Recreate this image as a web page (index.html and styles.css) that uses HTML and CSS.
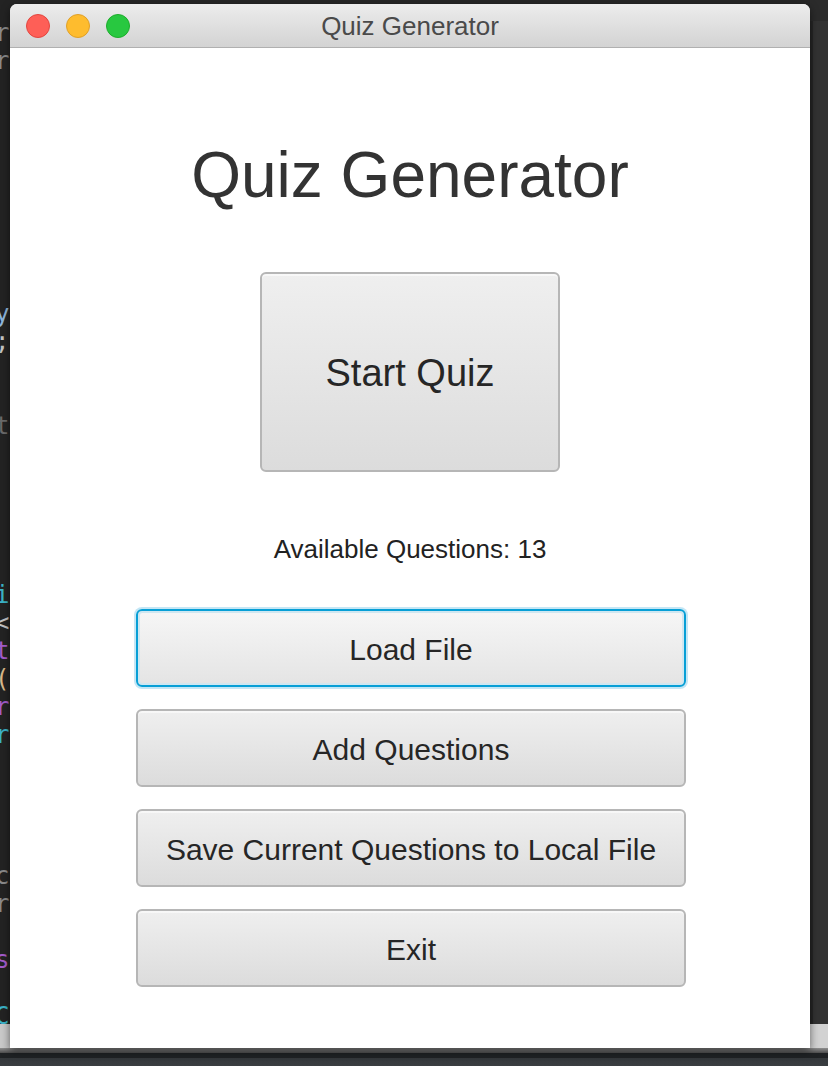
FILE: index.html
```html
<!DOCTYPE html>
<html lang="en">
<head>
<meta charset="utf-8">
<title>Quiz Generator</title>
<link rel="stylesheet" href="styles.css">
</head>
<body>
<div class="screen">
  <div class="desk">
    <div class="side side-left">
      <div class="code">
        <div class="ln c-gray">r</div>
        <div class="ln c-gray">r</div>
        <div class="ln"></div><div class="ln"></div><div class="ln"></div><div class="ln"></div>
        <div class="ln"></div><div class="ln"></div><div class="ln"></div><div class="ln"></div>
        <div class="ln c-blue">y</div>
        <div class="ln c-light">;</div>
        <div class="ln"></div><div class="ln"></div>
        <div class="ln c-dim">t</div>
        <div class="ln"></div><div class="ln"></div><div class="ln"></div><div class="ln"></div><div class="ln"></div>
        <div class="ln c-teal">i</div>
        <div class="ln c-light">&lt;</div>
        <div class="ln c-purple">t</div>
        <div class="ln c-orange">(</div>
        <div class="ln c-purple">r</div>
        <div class="ln c-teal">r</div>
        <div class="ln"></div><div class="ln"></div><div class="ln"></div><div class="ln"></div>
        <div class="ln c-gray">c</div>
        <div class="ln c-gray">r</div>
        <div class="ln"></div>
        <div class="ln c-purple">s</div>
        <div class="ln"></div>
        <div class="ln c-teal">C</div>
      </div>
      <div class="band"></div>
    </div>

    <div class="window">
      <div class="titlebar">
        <div class="lights">
          <span class="light red"></span>
          <span class="light yellow"></span>
          <span class="light green"></span>
        </div>
        <div class="wtitle">Quiz Generator</div>
      </div>
      <div class="content">
        <h1 class="heading">Quiz Generator</h1>
        <button class="btn btn-start">Start Quiz</button>
        <p class="count">Available Questions: 13</p>
        <div class="actions">
          <button class="btn btn-wide focused">Load File</button>
          <button class="btn btn-wide">Add Questions</button>
          <button class="btn btn-wide">Save Current Questions to Local File</button>
          <button class="btn btn-wide">Exit</button>
        </div>
      </div>
    </div>

    <div class="side side-right">
      <div class="dark"></div>
      <div class="band band-r"></div>
    </div>
  </div>
  <div class="taskbar"></div>
</div>
</body>
</html>
```

FILE: styles.css
```css
* { box-sizing: border-box; }

html, body {
  margin: 0;
  padding: 0;
  background: #262626;
}

.screen {
  width: 828px;
  height: 1066px;
  display: flex;
  flex-direction: column;
  overflow: hidden;
}

.desk {
  display: flex;
  height: 1048px;
}

.side {
  display: flex;
  flex-direction: column;
}

.side-left { width: 10px; }
.side-right { width: 18px; }

.code {
  flex: 1;
  background: #232323;
  overflow: hidden;
  padding-top: 19px;
  font-family: "DejaVu Sans Mono", monospace;
  font-size: 24px;
}

.ln {
  height: 28.1px;
  line-height: 28.1px;
  white-space: nowrap;
  text-indent: -5px;
}

.c-gray { color: #8a8a8a; }
.c-dim { color: #6a6a6a; }
.c-light { color: #c4c4c4; }
.c-blue { color: #8fb6dc; }
.c-teal { color: #3cb4c8; }
.c-purple { color: #a45ccc; }
.c-orange { color: #d9b98a; }

.band {
  height: 24px;
  background: #c9c9c9;
}

.band-r { background: #d2d2d2; }

.dark {
  flex: 1;
  background:
    linear-gradient(to bottom, #2b2b2b 21px, transparent 21px),
    linear-gradient(to right, #262626 3px, #323232 3px);
}

.window {
  width: 800px;
  margin-top: 4px;
  display: flex;
  flex-direction: column;
  background: #ffffff;
  border-radius: 7px 7px 0 0;
  box-shadow: 0 3px 8px rgba(0, 0, 0, 0.55);
  position: relative;
  z-index: 1;
}

.titlebar {
  height: 44px;
  display: flex;
  align-items: center;
  position: relative;
  background: linear-gradient(to bottom, #ececec, #d3d3d3);
  border-bottom: 1px solid #b0b0b0;
  border-radius: 7px 7px 0 0;
  padding-left: 16px;
}

.lights {
  display: flex;
  gap: 16px;
  margin-top: 1px;
}

.light {
  width: 24px;
  height: 24px;
  border-radius: 50%;
  display: block;
}

.red { background: #fe5f57; border: 1px solid #e2463f; }
.yellow { background: #febc2e; border: 1px solid #e0a028; }
.green { background: #28c840; border: 1px solid #1dad2b; }

.wtitle {
  position: absolute;
  left: 0;
  right: 0;
  top: 1px;
  height: 43px;
  line-height: 43px;
  text-align: center;
  font-family: "Liberation Sans", Arial, sans-serif;
  font-size: 26px;
  color: #4a4a4a;
  pointer-events: none;
}

.content {
  flex: 1;
  display: flex;
  flex-direction: column;
  align-items: center;
  font-family: "Liberation Sans", Arial, sans-serif;
}

.heading {
  margin: 95px 0 0;
  font-size: 64px;
  line-height: 64px;
  font-weight: normal;
  color: #333333;
}

.btn {
  font-family: "Liberation Sans", Arial, sans-serif;
  color: #262626;
  border: 2px solid #b6b6b6;
  border-radius: 6px;
  background: linear-gradient(to bottom, #efefef, #dcdcdc);
  box-shadow: inset 0 2px 0 rgba(255, 255, 255, 0.55);
  padding: 3px 0 0;
  cursor: pointer;
}

.btn-start {
  margin-top: 65px;
  width: 300px;
  height: 200px;
  font-size: 38px;
}

.count {
  margin: 62px 0 0;
  font-size: 26px;
  line-height: 30px;
  color: #222222;
}

.actions {
  margin-top: 45px;
  margin-left: 2px;
  display: flex;
  flex-direction: column;
  gap: 22px;
}

.btn-wide {
  width: 550px;
  height: 78px;
  font-size: 30px;
}

.btn-wide.focused {
  border-color: #079fd6;
  background: linear-gradient(to bottom, #f6f6f6, #e4e4e4);
  box-shadow: 0 0 0 2px #c4e6f5, inset 0 0 0 2px #cfe7f1;
}

.taskbar {
  height: 18px;
  background: linear-gradient(to bottom,
    #8f8f8f 0px, #4d4d4d 5px,
    #1f2224 5px, #1f2224 10px,
    #34383b 10px, #3a3e41 18px);
}
```
